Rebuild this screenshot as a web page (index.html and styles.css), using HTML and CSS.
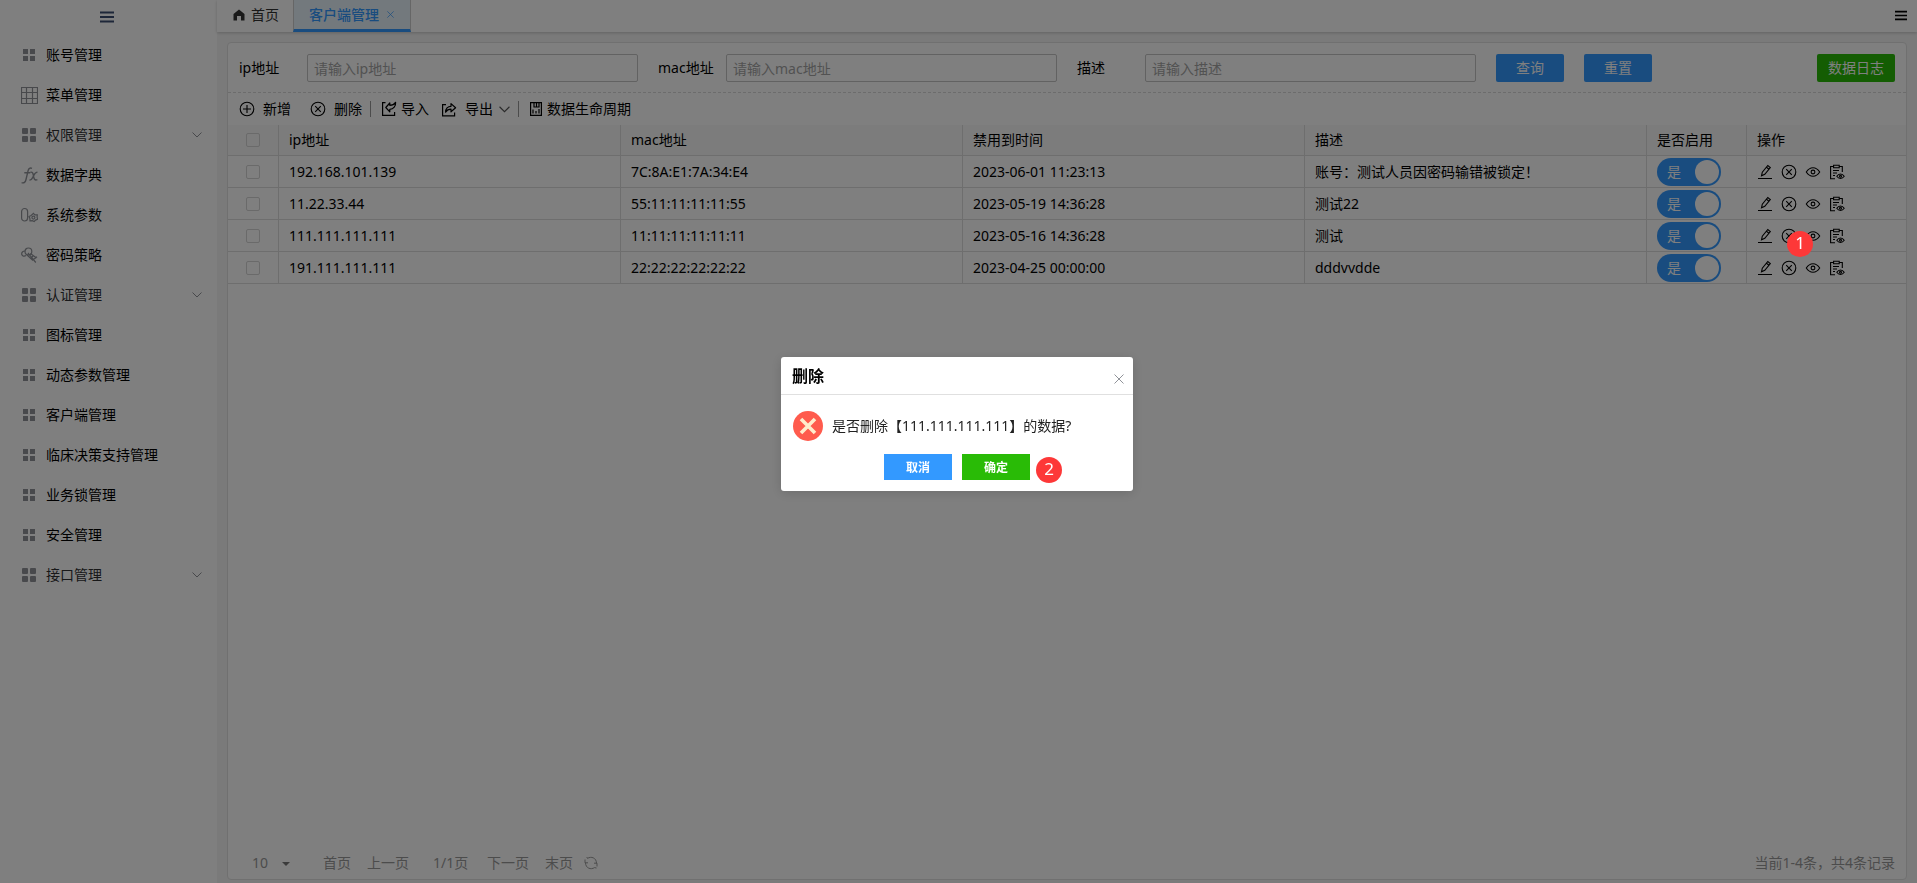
FILE: index.html
```html
<!DOCTYPE html>
<html lang="zh-CN">
<head>
<meta charset="utf-8">
<title>客户端管理</title>
<link rel="stylesheet" href="styles.css">
</head>
<body>
<svg class="sprite" aria-hidden="true">
  <symbol id="i-grid" viewBox="0 0 12 12"><path d="M0 0h5v5H0zM7 0h5v5H7zM0 7h5v5H0zM7 7h5v5H7z" fill="currentColor"/></symbol>
  <symbol id="i-blocks" viewBox="0 0 14 14"><g fill="currentColor"><rect width="6" height="6" rx="1"/><rect x="8" width="6" height="6" rx="1"/><rect y="8" width="6" height="6" rx="1"/><rect x="8" y="8" width="6" height="6" rx="1"/></g></symbol>
  <symbol id="i-table" viewBox="0 0 17 17"><path d="M.5.5h16v16H.5zM5.5.5v16M11.5.5v16M.5 5.5h16M.5 11.5h16" fill="none" stroke="currentColor" stroke-width="1.200"/></symbol>
  <symbol id="i-fx" viewBox="0 0 17 17"><path d="M11 1.400C9 .4 7.600 1.500 7.100 3.600L5 12.500C4.500 15 3 16.500.6 15.600M3.300 5.800h6M9.500 5.200c2.300-.5 2.500 1.200 3 3.700s.8 5 3.900 3.700M16.500 5.100c-2.500 0-3.100 2-4.100 4s-1.500 4-4 4" fill="none" stroke="currentColor" stroke-width="1.400"/></symbol>
  <symbol id="i-param" viewBox="0 0 17 17"><g fill="none" stroke="currentColor" stroke-width="1.200"><rect x=".6" y="1.500" width="6" height="12.500" rx="3"/><path d="M12.500 6.400l1.300 1.400 2.500.1-.2 2.400.6 1.900-2.200.9-1.300 1.500-1.900-1-2.300.2-.1-2.300-.9-2 2.100-1z"/><circle cx="12.400" cy="10.600" r="1.500"/></g></symbol>
  <symbol id="i-key" viewBox="0 0 17 17"><g fill="none" stroke="currentColor" stroke-width="1.200"><circle cx="7.400" cy="4.400" r="3.400"/><path d="M4.200 4C1.600 4 .5 5.500.7 7.200c.3 2 2.600 2.500 4.300 1.400M7 6l7.800 9.500M5.500 7.500l6.500 6M9.500 6.500l6 4.500M10.500 10.500l1.800-1.700M12.200 12.800l3.800-3"/></g></symbol>
  <symbol id="i-bars" viewBox="0 0 14 12"><path d="M0 1.500h14M0 6h14M0 10.500h14" stroke="currentColor" stroke-width="2"/></symbol>
  <symbol id="i-down" viewBox="0 0 10 6"><path d="M.5.5L5 5 9.500.5" fill="none" stroke="currentColor"/></symbol>
  <symbol id="i-home" viewBox="0 0 12 12"><path d="M6 .5L.5 5v6.500h3.500V7h4v4.500h3.500V5z" fill="currentColor"/></symbol>
  <symbol id="i-x" viewBox="0 0 10 10"><path d="M.5.5l9 9M9.500.5l-9 9" fill="none" stroke="currentColor"/></symbol>
  <symbol id="i-plus" viewBox="0 0 16 16"><g fill="none" stroke="currentColor" stroke-width="1.100"><circle cx="8" cy="8" r="6.800"/><path d="M8 4v8M4 8h8"/></g></symbol>
  <symbol id="i-remove" viewBox="0 0 16 16"><g fill="none" stroke="currentColor" stroke-width="1.100"><circle cx="8" cy="8" r="6.800"/><path d="M5.200 5.200l5.600 5.600M10.800 5.200l-5.600 5.600"/></g></symbol>
  <symbol id="i-import" viewBox="0 0 16 16"><g fill="none" stroke="currentColor" stroke-width="1.200"><path d="M4.500 1.600H1.600v12.800h12V11"/><path d="M4.800 6.500l4-4.500v2.300c2.500 0 4.500-1 5.800-3C15 5 12.500 8.300 8.800 8.300v2.500z" stroke-linejoin="round"/></g></symbol>
  <symbol id="i-export" viewBox="0 0 16 16"><g fill="none" stroke="currentColor" stroke-width="1.200"><path d="M5 3.600H1.600v11.200h12V11.500"/><path d="M4.600 11.200C4.600 7.800 6.700 5.300 10 5.300V2.600l4.600 4.200-4.600 4V8.200c-2.600 0-4.200 1-5.400 3z" stroke-linejoin="round"/></g></symbol>
  <symbol id="i-cycle" viewBox="0 0 14 16"><path d="M1.600 1.600h10.800v12.800H1.600zM5 1.600v4.400h5V1.600M7.500 1.600v4.400M4 8.500v4M7 10v2.500M10 8v4.500" fill="none" stroke="currentColor" stroke-width="1.200"/></symbol>
  <symbol id="i-edit" viewBox="0 0 16 16"><path d="M1 14.500h14M4.500 11.800l.8-3.600L10.800 1.500l2.500 2-5.500 6.800zM9.500 3.200L12 5.200" fill="none" stroke="currentColor" stroke-width="1.100"/></symbol>
  <symbol id="i-eye" viewBox="0 0 16 16"><g fill="none" stroke="currentColor" stroke-width="1.100"><path d="M1.300 8C3.200 5 5.500 3.700 8 3.700S12.800 5 14.700 8C12.800 11 10.500 12.200 8 12.200S3.200 11 1.300 8z"/><circle cx="8" cy="8" r="1.900"/></g></symbol>
  <symbol id="i-log" viewBox="0 0 16 16"><g fill="none" stroke="currentColor" stroke-width="1.100"><path d="M5 2.500H1.600v12.200H6M10 2.500h3.300V8M4.600 1.300h5.600v2.400H4.600zM4 6.500h6M4 9h4M4 11.500h2"/><path d="M7.800 12.300c1-1.600 2.200-2.300 3.700-2.300s2.700.7 3.700 2.300c-1 1.500-2.200 2.200-3.700 2.200s-2.700-.7-3.700-2.200z"/><circle cx="11.500" cy="12.200" r="1"/></g></symbol>
  <symbol id="i-refresh" viewBox="0 0 14 14"><path d="M3.500 2.400C7 0 12.500 1.700 12.500 7.300M1.500 6.700C1.500 12.300 7 14 10.500 11.600M1 3.500v3.300h3M13 10.500V7.200h-3M3.500 2.400L2.800 1M10.500 11.600l2 .4" fill="none" stroke="currentColor"/></symbol>
</svg>

<div class="app">
  <aside class="sidebar">
    <button class="collapse" aria-label="折叠菜单"><svg width="14" height="12"><use href="#i-bars"/></svg></button>
    <nav class="menu">
      <a class="item" href="#"><span class="ico"><svg width="12" height="12"><use href="#i-grid"/></svg></span>账号管理</a>
      <a class="item" href="#"><span class="ico"><svg width="17" height="17"><use href="#i-table"/></svg></span>菜单管理</a>
      <a class="item group" href="#"><span class="ico"><svg width="14" height="14"><use href="#i-blocks"/></svg></span>权限管理<svg class="arrow" width="10" height="6"><use href="#i-down"/></svg></a>
      <a class="item" href="#"><span class="ico"><svg width="17" height="17"><use href="#i-fx"/></svg></span>数据字典</a>
      <a class="item" href="#"><span class="ico"><svg width="17" height="17"><use href="#i-param"/></svg></span>系统参数</a>
      <a class="item" href="#"><span class="ico"><svg width="17" height="17"><use href="#i-key"/></svg></span>密码策略</a>
      <a class="item group" href="#"><span class="ico"><svg width="14" height="14"><use href="#i-blocks"/></svg></span>认证管理<svg class="arrow" width="10" height="6"><use href="#i-down"/></svg></a>
      <a class="item" href="#"><span class="ico"><svg width="12" height="12"><use href="#i-grid"/></svg></span>图标管理</a>
      <a class="item" href="#"><span class="ico"><svg width="12" height="12"><use href="#i-grid"/></svg></span>动态参数管理</a>
      <a class="item" href="#"><span class="ico"><svg width="12" height="12"><use href="#i-grid"/></svg></span>客户端管理</a>
      <a class="item" href="#"><span class="ico"><svg width="12" height="12"><use href="#i-grid"/></svg></span>临床决策支持管理</a>
      <a class="item" href="#"><span class="ico"><svg width="12" height="12"><use href="#i-grid"/></svg></span>业务锁管理</a>
      <a class="item" href="#"><span class="ico"><svg width="12" height="12"><use href="#i-grid"/></svg></span>安全管理</a>
      <a class="item group" href="#"><span class="ico"><svg width="14" height="14"><use href="#i-blocks"/></svg></span>接口管理<svg class="arrow" width="10" height="6"><use href="#i-down"/></svg></a>
    </nav>
  </aside>

  <div class="main">
    <header class="tabs">
      <a class="tab" href="#"><svg width="12" height="12"><use href="#i-home"/></svg>首页</a>
      <a class="tab active" href="#">客户端管理<svg width="7" height="7"><use href="#i-x"/></svg></a>
      <button class="more" aria-label="更多"><svg width="12" height="11"><use href="#i-bars"/></svg></button>
    </header>

    <section class="card">
      <form class="search">
        <div class="field"><label for="ip">ip地址</label><input id="ip" type="text" placeholder="请输入ip地址"></div>
        <div class="field"><label for="mac">mac地址</label><input id="mac" type="text" placeholder="请输入mac地址"></div>
        <div class="field"><label for="desc">描述</label><input id="desc" type="text" placeholder="请输入描述"></div>
        <button class="btn" type="button">查询</button>
        <button class="btn" type="button">重置</button>
        <button class="btn green log" type="button">数据日志</button>
      </form>

      <div class="toolbar">
        <button class="tool wide"><svg width="16" height="16"><use href="#i-plus"/></svg>新增</button>
        <button class="tool wide second"><svg width="16" height="16"><use href="#i-remove"/></svg>删除</button>
        <span class="sep"></span>
        <button class="tool"><svg width="16" height="16"><use href="#i-import"/></svg>导入</button>
        <button class="tool wide export"><svg width="16" height="16"><use href="#i-export"/></svg>导出<svg class="more-arrow" width="11" height="7"><use href="#i-down"/></svg></button>
        <span class="sep"></span>
        <button class="tool"><svg width="14" height="16"><use href="#i-cycle"/></svg>数据生命周期</button>
      </div>

      <table class="grid">
        <colgroup><col class="c-check"><col><col><col><col><col class="c-state"><col class="c-ops"></colgroup>
        <thead>
          <tr><th><input type="checkbox" aria-label="全选"></th><th>ip地址</th><th>mac地址</th><th>禁用到时间</th><th>描述</th><th>是否启用</th><th>操作</th></tr>
        </thead>
        <tbody>
          <tr>
            <td><input type="checkbox" aria-label="选择"></td><td>192.168.101.139</td><td>7C:8A:E1:7A:34:E4</td><td>2023-06-01 11:23:13</td><td>账号：测试人员因密码输错被锁定！</td>
            <td><button class="switch" role="switch" aria-checked="true">是<i></i></button></td>
            <td><div class="ops"><button aria-label="编辑"><svg width="16" height="16"><use href="#i-edit"/></svg></button><button aria-label="删除"><svg width="16" height="16"><use href="#i-remove"/></svg></button><button aria-label="查看"><svg width="16" height="16"><use href="#i-eye"/></svg></button><button aria-label="日志"><svg width="16" height="16"><use href="#i-log"/></svg></button></div></td>
          </tr>
          <tr>
            <td><input type="checkbox" aria-label="选择"></td><td>11.22.33.44</td><td>55:11:11:11:11:55</td><td>2023-05-19 14:36:28</td><td>测试22</td>
            <td><button class="switch" role="switch" aria-checked="true">是<i></i></button></td>
            <td><div class="ops"><button aria-label="编辑"><svg width="16" height="16"><use href="#i-edit"/></svg></button><button aria-label="删除"><svg width="16" height="16"><use href="#i-remove"/></svg></button><button aria-label="查看"><svg width="16" height="16"><use href="#i-eye"/></svg></button><button aria-label="日志"><svg width="16" height="16"><use href="#i-log"/></svg></button></div></td>
          </tr>
          <tr>
            <td><input type="checkbox" aria-label="选择"></td><td>111.111.111.111</td><td>11:11:11:11:11:11</td><td>2023-05-16 14:36:28</td><td>测试</td>
            <td><button class="switch" role="switch" aria-checked="true">是<i></i></button></td>
            <td><div class="ops"><button aria-label="编辑"><svg width="16" height="16"><use href="#i-edit"/></svg></button><button aria-label="删除"><svg width="16" height="16"><use href="#i-remove"/></svg></button><button aria-label="查看"><svg width="16" height="16"><use href="#i-eye"/></svg></button><button aria-label="日志"><svg width="16" height="16"><use href="#i-log"/></svg></button></div></td>
          </tr>
          <tr>
            <td><input type="checkbox" aria-label="选择"></td><td>191.111.111.111</td><td>22:22:22:22:22:22</td><td>2023-04-25 00:00:00</td><td>dddvvdde</td>
            <td><button class="switch" role="switch" aria-checked="true">是<i></i></button></td>
            <td><div class="ops"><button aria-label="编辑"><svg width="16" height="16"><use href="#i-edit"/></svg></button><button aria-label="删除"><svg width="16" height="16"><use href="#i-remove"/></svg></button><button aria-label="查看"><svg width="16" height="16"><use href="#i-eye"/></svg></button><button aria-label="日志"><svg width="16" height="16"><use href="#i-log"/></svg></button></div></td>
          </tr>
        </tbody>
      </table>

      <footer class="pager">
        <div class="size"><select aria-label="每页条数"><option>10</option></select><span class="caret"></span></div>
        <a href="#">首页</a>
        <a href="#">上一页</a>
        <span class="pages">1/1页</span>
        <a href="#">下一页</a>
        <a href="#">末页</a>
        <button class="reload" aria-label="刷新"><svg width="14" height="14"><use href="#i-refresh"/></svg></button>
        <span class="total">当前1-4条，共4条记录</span>
      </footer>
    </section>
  </div>
</div>

<div class="mask">
  <div class="dialog" role="dialog" aria-labelledby="dlg-title">
    <header class="dialog-head"><h2 id="dlg-title">删除</h2><button class="close" aria-label="关闭"><svg width="10" height="10"><use href="#i-x"/></svg></button></header>
    <div class="dialog-body">
      <svg width="30" height="30" viewBox="0 0 30 30"><circle cx="15" cy="15" r="15" fill="#ff5b4d"/><path d="M8 8l14 14M22 8L8 22" stroke="#ffeccc" stroke-width="3.600"/></svg>
      <p>是否删除【111.111.111.111】的数据?</p>
    </div>
    <div class="dialog-foot"><button class="btn small">取消</button><button class="btn small green">确定</button></div>
    <span class="mark mark-confirm">2</span>
  </div>
  <span class="mark mark-row">1</span>
</div>
</body>
</html>
```
FILE: styles.css
```css
* { box-sizing: border-box; }
body, button, input, select {
  font-family: "Noto Sans", "Noto Sans CJK SC", sans-serif;
  font-size: 14px;
  line-height: 20px;
}
body { margin: 0; color: #000; background: #fff; }
a { color: inherit; text-decoration: none; }
button { padding: 0; border: 0; background: none; color: inherit; }
svg { flex: none; display: block; }
.sprite { position: absolute; width: 0; height: 0; }

.app { display: flex; height: 100vh; }

.sidebar { width: 217px; flex: none; display: flex; flex-direction: column; }
.collapse { height: 35px; display: flex; justify-content: center; align-items: center; padding: 0 3px 1px 0; color: #3c4f73; }
.menu { display: flex; flex-direction: column; padding-left: 20px; }
.item { height: 40px; display: flex; align-items: center; gap: 8px; padding-right: 15px; }
.group { color: #303133; }
.ico { width: 18px; display: flex; justify-content: center; color: #909399; }
.arrow { margin-left: auto; color: #909399; }

.main { flex: 1; min-width: 0; display: flex; flex-direction: column; background: #f5f5f5; }
.tabs { height: 32px; flex: none; display: flex; background: #fff; box-shadow: 0 1px 3px rgba(0, 0, 0, .2); }
.tab { display: flex; align-items: center; gap: 6px; padding: 0 14px 2px 16px; color: #333; }
.tab.active {
  gap: 8px;
  padding: 0 16px 0 15px;
  border-left: 1px solid #ccc;
  border-right: 1px solid #ccc;
  border-bottom: 3px solid #39f;
  background: #e6f3fb;
  color: #39f;
  font-weight: 500;
}
.more { margin-left: auto; padding: 0 10px 2px; }

.card {
  flex: 1;
  display: flex;
  flex-direction: column;
  margin: 10px 10px 3px;
  border: 1px solid #e0e0e0;
  border-radius: 4px;
  background: #fff;
}
.search { display: flex; align-items: center; gap: 20px; padding: 11px 11px 10px; border-bottom: 1px dashed #d8d8d8; }
.field { flex: 0 1 399px; display: flex; align-items: center; }
.field label { width: 68px; flex: none; }
.field input {
  flex: 1;
  min-width: 0;
  height: 28px;
  padding: 0 6px;
  border: 1px solid #c4c4c4;
  border-radius: 2px;
  outline: 0;
}
.field input::placeholder { color: #a4a4a4; }
.btn { width: 68px; height: 28px; border-radius: 2px; background: #39f; color: #fff; }
.green { background: #29bb06; }
.log { width: 78px; margin-left: auto; }

.toolbar { height: 32px; display: flex; align-items: center; padding-left: 11px; }
.tool { display: flex; align-items: center; gap: 4px; }
.tool.wide { gap: 8px; }
.second { margin-left: 19px; }
.export { margin-left: 12px; }
.more-arrow { margin-left: -2px; color: #555; }
.sep { width: 1px; height: 16px; margin: 0 10px 0 8px; background: #999; }

.grid { width: 100%; table-layout: fixed; border-collapse: separate; border-spacing: 0; }
.c-check { width: 51px; }
.c-state { width: 100px; }
.c-ops { width: 159px; }
.grid th, .grid td {
  height: 32px;
  padding: 0 10px;
  border-right: 1px solid #dcdcdc;
  border-bottom: 1px solid #dcdcdc;
  font-weight: 400;
  text-align: left;
}
.grid th { height: 31px; background: #f8f8f8; }
.grid th:last-child, .grid td:last-child { border-right: 0; }
.grid th:first-child, .grid td:first-child { text-align: center; }
.grid input {
  appearance: none;
  display: block;
  width: 14px;
  height: 14px;
  margin: 0 auto;
  border: 1px solid #d4d4d4;
  border-radius: 2px;
}
.switch {
  width: 64px;
  height: 28px;
  display: flex;
  align-items: center;
  justify-content: space-between;
  padding: 0 2px 0 10px;
  border-radius: 14px;
  background: #39f;
  color: #fff;
}
.switch i { width: 24px; height: 24px; border-radius: 50%; background: #fff; }
.ops { display: flex; gap: 8px; }

.pager { margin-top: auto; height: 32px; display: flex; align-items: center; gap: 16px; padding: 0 11px 0 24px; color: #999; }
.size { display: flex; align-items: center; margin-right: 17px; }
.size select { appearance: none; width: 30px; padding: 0; border: 0; background: none; color: inherit; }
.caret { margin-top: 2px; border: 4px solid transparent; border-top-color: #777; border-bottom: 0; }
.pages { min-width: 38px; margin-left: 8px; }
.reload { margin-left: -5px; }
.total { margin-left: auto; }

.mask {
  position: fixed;
  inset: 0;
  display: flex;
  align-items: center;
  justify-content: center;
  padding: 0 3px 35px 0;
  background: rgba(0, 0, 0, .5);
}
.dialog {
  position: relative;
  width: 352px;
  border-radius: 3px;
  background: #fff;
  box-shadow: 0 2px 12px rgba(0, 0, 0, .15);
}
.dialog-head { height: 38px; display: flex; align-items: center; justify-content: space-between; padding: 0 9px 0 11px; border-bottom: 1px solid #e0e0e0; }
.dialog-head h2 { margin: 0; font-size: 16px; font-weight: 600; }
.close { color: #909399; padding-top: 6px; }
.dialog-body { display: flex; align-items: center; gap: 9px; padding: 16px 12px 13px; color: #222; }
.dialog-body p { margin: 0; }
.dialog-foot { display: flex; justify-content: center; gap: 10px; padding-bottom: 11px; }
.small { height: 26px; padding-top: 2px; border-radius: 0; font-size: 12px; font-weight: 600; }
.mark {
  position: absolute;
  width: 26px;
  height: 26px;
  border-radius: 50%;
  background: #fd3838;
  color: #fff;
  font-size: 17px;
  line-height: 24px;
  text-align: center;
}
.mark-confirm { right: 71px; bottom: 8px; }
.mark-row { top: 231px; right: 104px; }
```
